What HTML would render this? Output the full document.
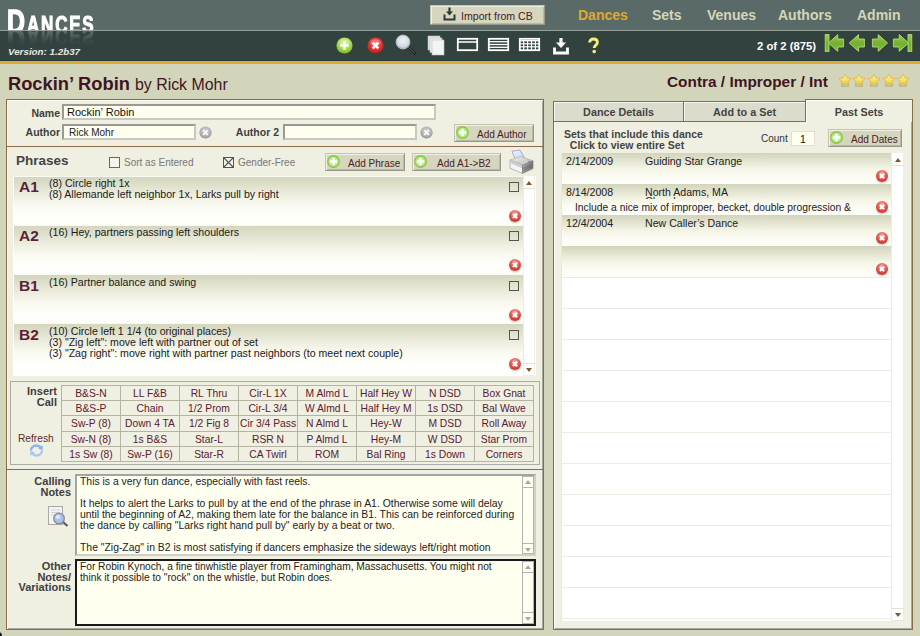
<!DOCTYPE html>
<html><head><meta charset="utf-8">
<style>
*{box-sizing:border-box;margin:0;padding:0}
html,body{width:920px;height:636px;overflow:hidden;background:#d3d5bb;font-family:"Liberation Sans",sans-serif;position:relative}
.a{position:absolute}
.hdr1{left:0;top:0;width:920px;height:30px;background:#5a6a68}
.hline{left:0;top:30px;width:920px;height:1px;background:#94a098}
.hdr2{left:0;top:31px;width:920px;height:30px;background:#32423f;border-bottom:1px solid #2a3a40}
.gold{left:0;top:61px;width:920px;height:3px;background:#dcaa2c}
.nav{top:7px;font:bold 14px "Liberation Sans",sans-serif;color:#d6d6b6;white-space:nowrap}
.btn{background:#d6d6be;border:1px solid #c4c4b0;border-right-color:#98988a;border-bottom-color:#98988a;box-shadow:inset 1px 1px 0 #f0f0e2,inset -1px -1px 0 #b8b8a6;color:#4a2028;white-space:nowrap}
.panel{background:#efefe2;border:1px solid #8b6a45;box-shadow:inset 1px 1px 0 #fbfbf4,inset -1px -1px 0 #a8a8a0}
.lbl{font:bold 10px "Liberation Sans",sans-serif;color:#3e3e3e;white-space:nowrap;text-align:right}
.inp{background:#fffff0;border:2px solid #9a9a90;border-right-color:#c8c8c0;border-bottom-color:#c8c8c0}
.txt{font:10px "Liberation Sans",sans-serif;color:#222;white-space:nowrap}
.maroon{color:#401422}
.prow{left:14px;width:509px;background:linear-gradient(#fafaf4 0,#fafaf4 1px,#d4d6be 1px,#dcdec8 15%,#eeeee0 40%,#fafaf2 62%,#fefefa 80%)}
.plab{left:19px;margin-top:-2px;font:bold 15.5px "Liberation Sans",sans-serif;color:#5e1e38}
.ptxt{left:49px;font:10.6px/11px "Liberation Sans",sans-serif;color:#1a1a1a;white-space:nowrap}
.pchk{left:509px;width:10px;height:10px;border:1px solid #555}
.xbtn{width:12px;height:12px;border-radius:50%;background:radial-gradient(circle at 50% 30%,#f4b0a8,#e06058 40%,#d03830 75%,#c02820);box-shadow:0 1.5px 1.5px rgba(80,80,60,0.25)}
.xbtn::before,.xbtn::after{content:"";position:absolute;left:5px;top:3px;width:2.2px;height:6px;background:#fff;transform:rotate(45deg)}
.xbtn::after{transform:rotate(-45deg)}
.grid{border-collapse:collapse;table-layout:fixed;width:473px;height:77px}
.grid td{border:1px solid #b4b4a0;width:59px;height:15.2px;padding:0;text-align:center;font:10.3px/13px "Liberation Sans",sans-serif;color:#5a2030;white-space:nowrap;padding-top:1px}
.notes{font:10.4px/11px "Liberation Sans",sans-serif;color:#222;white-space:nowrap}
.tab{background:#dcdccc;border:1px solid #8b6a45;box-shadow:inset 1px 1px 0 #f6f6ee;font:bold 10.8px/21px "Liberation Sans",sans-serif;color:#444;text-align:center;white-space:nowrap}
.tab.act{background:#efefe2;border-bottom:none;line-height:25px;height:23px;box-shadow:inset 1px 1px 0 #fafaf2}
.srow{left:562px;width:329px;height:31px;background:linear-gradient(#d2d4bc,#e4e4d0 25%,#f4f4e6 50%,#fcfcf4 75%,#fefefa)}
.stxt{font:10.6px/11px "Liberation Sans",sans-serif;color:#222;white-space:nowrap}
.lg{position:absolute;left:0;top:0;height:30px;width:100px;color:#fff;font-weight:bold;white-space:nowrap}
.lg .d{position:absolute;left:0px;bottom:-7px;font-size:32.5px;line-height:29px;transform:scaleX(0.77);transform-origin:0 100%;-webkit-text-stroke:1.3px #fff}
.lg .r{position:absolute;left:20px;bottom:-4.9px;font-size:23px;line-height:20px;letter-spacing:2.4px;transform:scaleX(0.74);transform-origin:0 100%;-webkit-text-stroke:1.1px #fff}
.tsb{width:12px;border:1px solid #b4b4b0;background:#fffff0}
.tup{width:0;height:0;border-left:3.5px solid transparent;border-right:3.5px solid transparent;border-bottom:4px solid #a8a8a8}
.tdn{width:0;height:0;border-left:3.5px solid transparent;border-right:3.5px solid transparent;border-top:4px solid #a8a8a8}
</style></head><body>

<svg width="0" height="0" style="position:absolute">
<defs>
<radialGradient id="gG" cx="50%" cy="35%" r="65%"><stop offset="0" stop-color="#d4f098"/><stop offset="0.55" stop-color="#a8dc50"/><stop offset="1" stop-color="#78b828"/></radialGradient>
<radialGradient id="rG" cx="50%" cy="40%" r="60%"><stop offset="0" stop-color="#f08080"/><stop offset="0.6" stop-color="#dc3838"/><stop offset="1" stop-color="#b01c1c"/></radialGradient>
<radialGradient id="cG" cx="50%" cy="40%" r="60%"><stop offset="0" stop-color="#d8d8d8"/><stop offset="0.7" stop-color="#b0b0b0"/><stop offset="1" stop-color="#8c8c8c"/></radialGradient>
<linearGradient id="arG" x1="0" y1="0" x2="0" y2="1"><stop offset="0" stop-color="#9ccc58"/><stop offset="0.5" stop-color="#74b030"/><stop offset="1" stop-color="#80bc3c"/></linearGradient>
<linearGradient id="stG" x1="0" y1="0" x2="0" y2="1"><stop offset="0" stop-color="#fff8b0"/><stop offset="0.55" stop-color="#f2e060"/><stop offset="1" stop-color="#e0c040"/></linearGradient>
<symbol id="plus" viewBox="0 0 16 16"><circle cx="8" cy="8" r="7.6" fill="url(#gG)"/><ellipse cx="8" cy="5" rx="5" ry="3" fill="#fff" opacity="0.25"/><path d="M8 4v8M4 8h8" stroke="#f8fff0" stroke-width="2.3"/></symbol>
<symbol id="plusb" viewBox="0 0 16 16"><circle cx="8" cy="8" r="7.1" fill="#bce890" stroke="#84c83c" stroke-width="1.6"/><path d="M8 3.6v8.8M3.6 8h8.8" stroke="#fff" stroke-width="3"/></symbol>
<symbol id="xred" viewBox="0 0 16 16"><circle cx="8" cy="8" r="7.6" fill="url(#rG)"/><ellipse cx="8" cy="5" rx="5" ry="3" fill="#fff" opacity="0.2"/><path d="M5.3 5.3l5.4 5.4M10.7 5.3l-5.4 5.4" stroke="#fff" stroke-width="2.3"/></symbol>
<symbol id="xgrey" viewBox="0 0 16 16"><circle cx="8" cy="8" r="7.5" fill="url(#cG)"/><path d="M5.2 5.2l5.6 5.6M10.8 5.2l-5.6 5.6" stroke="#fafafa" stroke-width="2.2"/></symbol>
<symbol id="star" viewBox="0 0 24 24"><ellipse cx="12" cy="22.5" rx="7" ry="1.5" fill="#8a8a70" opacity="0.35"/><path d="M12.00 2.00L15.29 8.27L22.27 9.46L17.33 14.53L18.35 21.54L12.00 18.40L5.65 21.54L6.67 14.53L1.73 9.46L8.71 8.27z" fill="url(#stG)" stroke="#d4a838" stroke-width="1.1" stroke-linejoin="round"/></symbol>
</defs></svg>
<div class="a hdr1"></div>
<div class="a hline"></div>
<div class="a hdr2"></div>
<div class="a gold"></div>

<!-- logo -->
<div class="a logo" style="left:7px;top:0px;height:30px;overflow:hidden;width:100px"><div class="lg"><span class="d">D</span><span class="r">ANCES</span></div></div>
<div class="a logo" style="left:7px;top:31px;height:14px;overflow:hidden;width:100px;opacity:0.22;-webkit-mask-image:linear-gradient(#000,rgba(0,0,0,0.3) 60%,transparent)"><div class="lg" style="transform:scaleY(-1);transform-origin:0 100%;top:-30px"><span class="d">D</span><span class="r">ANCES</span></div></div>
<div class="a" style="left:8px;top:45.5px;font:bold italic 9.8px 'Liberation Sans',sans-serif;color:#e4e8e0;white-space:nowrap">Version: 1.2b37</div>

<!-- import button -->
<div class="a btn" style="left:430px;top:5px;width:115px;height:20px;font:11.5px 'Liberation Sans',sans-serif;padding:4px 0 0 30px;font-size:10.6px">Import from CB</div>
<svg class="a" style="left:443px;top:7px" width="13" height="14" viewBox="0 0 13 14"><path d="M1.5 7.5v5h10v-5" fill="none" stroke="#2c3a38" stroke-width="2"/><rect x="5.4" y="0.5" width="2.2" height="4.5" fill="#2c3a38"/><path d="M3 4.6h7l-3.5 4z" fill="#2c3a38"/></svg>

<!-- nav -->
<div class="a nav" style="left:578px;color:#e0a830">Dances</div>
<div class="a nav" style="left:652px">Sets</div>
<div class="a nav" style="left:707px">Venues</div>
<div class="a nav" style="left:778px">Authors</div>
<div class="a nav" style="left:857px">Admin</div>

<div class="a" style="left:757px;top:40px;font:bold 11.3px 'Liberation Sans',sans-serif;color:#fff;white-space:nowrap">2 of 2 (875)</div>


<!-- toolbar icons -->
<svg class="a" style="left:336px;top:37px" width="17" height="17"><use href="#plus"/></svg>
<svg class="a" style="left:367px;top:37px" width="17" height="17"><use href="#xred"/></svg>
<svg class="a" style="left:395px;top:34px" width="22" height="21" viewBox="0 0 22 21"><line x1="12" y1="12" x2="20.5" y2="20" stroke="#1c2222" stroke-width="2.6"/><line x1="12.5" y1="12.5" x2="19.5" y2="19" stroke="#777" stroke-width="0.9"/><defs><radialGradient id="mgG" cx="50%" cy="40%" r="60%"><stop offset="0" stop-color="#eef2f6"/><stop offset="0.7" stop-color="#d4dce4"/><stop offset="1" stop-color="#a8b0b8"/></radialGradient></defs><circle cx="8" cy="8" r="6.9" fill="url(#mgG)" stroke="#b8bcc0" stroke-width="1"/></svg>
<svg class="a" style="left:427px;top:35px" width="18" height="21" viewBox="0 0 18 21"><rect x="1" y="1" width="12" height="14" fill="#e8e8e8" stroke="#bbb" stroke-width="0.6"/><rect x="3" y="3" width="12" height="14.5" fill="#efefef" stroke="#bbb" stroke-width="0.6"/><rect x="5" y="5" width="12" height="15" fill="#f4f4f4" stroke="#c0c0c0" stroke-width="0.6"/></svg>
<svg class="a" style="left:456px;top:37px" width="23" height="15" viewBox="0 0 23 15"><rect x="1.8" y="1.8" width="19.4" height="11.4" fill="none" stroke="#fff" stroke-width="1.8"/><line x1="1" y1="5" x2="22" y2="5" stroke="#fff" stroke-width="1.5"/></svg>
<svg class="a" style="left:487px;top:37px" width="23" height="15" viewBox="0 0 23 15"><rect x="1.8" y="1.8" width="19.4" height="11.4" fill="none" stroke="#fff" stroke-width="1.8"/><line x1="1" y1="4.7" x2="22" y2="4.7" stroke="#fff" stroke-width="1.3"/><line x1="1" y1="7.5" x2="22" y2="7.5" stroke="#fff" stroke-width="1.3"/><line x1="1" y1="10.3" x2="22" y2="10.3" stroke="#fff" stroke-width="1.3"/></svg>
<svg class="a" style="left:518px;top:37px" width="23" height="15" viewBox="0 0 23 15"><rect x="1.8" y="1.8" width="19.4" height="11.4" fill="none" stroke="#fff" stroke-width="1.8"/><line x1="1" y1="3.6" x2="22" y2="3.6" stroke="#fff" stroke-width="1.6"/><line x1="1" y1="6.8" x2="22" y2="6.8" stroke="#fff" stroke-width="1.2"/><line x1="1" y1="9.8" x2="22" y2="9.8" stroke="#fff" stroke-width="1.2"/><line x1="5.7" y1="4" x2="5.7" y2="13" stroke="#fff" stroke-width="1.2"/><line x1="9.6" y1="4" x2="9.6" y2="13" stroke="#fff" stroke-width="1.2"/><line x1="13.5" y1="4" x2="13.5" y2="13" stroke="#fff" stroke-width="1.2"/><line x1="17.4" y1="4" x2="17.4" y2="13" stroke="#fff" stroke-width="1.2"/></svg>
<svg class="a" style="left:552px;top:37px" width="18" height="18" viewBox="0 0 18 18"><path d="M2.5 10.5v5.5h13v-5.5" fill="none" stroke="#fff" stroke-width="2.8"/><rect x="7.4" y="1" width="3.2" height="5" fill="#fff"/><path d="M4 5.5h10l-5 5.5z" fill="#fff"/></svg>
<svg class="a" style="left:586px;top:37px" width="15" height="18" viewBox="0 0 15 18"><path d="M3.6 5.6c0-2.4 1.8-3.6 3.9-3.6 2.2 0 3.9 1.3 3.9 3.4 0 2.6-3.2 2.9-3.2 5.6" fill="none" stroke="#f2ee80" stroke-width="2.8"/><circle cx="8.2" cy="14.6" r="1.8" fill="#f2ee80"/></svg>

<!-- nav arrows -->
<svg class="a" style="left:824px;top:33px" width="90" height="20" viewBox="0 0 90 20">
<g stroke="#28401a" stroke-width="1.6" fill="none" opacity="0.7"><rect x="1.2" y="1.6" width="3.8" height="16.8"/>
<path d="M4.4 10L13.8 1.6v4.4h5.8v8h-5.8v4.4z"/>
<path d="M25.2 10L34.6 1.6v4.4h5.8v8h-5.8v4.4z"/>
<path d="M63.6 10L54.2 1.6v4.4h-5.8v8h5.8v4.4z"/>
<path d="M84.6 10L75.2 1.6v4.4h-5.8v8h5.8v4.4z"/>
<rect x="84" y="1.6" width="3.8" height="16.8"/></g>
<g stroke="#b4da7c" stroke-width="0.9" fill="url(#arG)"><rect x="1.2" y="1.6" width="3.8" height="16.8"/>
<path d="M4.4 10L13.8 1.6v4.4h5.8v8h-5.8v4.4z"/>
<path d="M25.2 10L34.6 1.6v4.4h5.8v8h-5.8v4.4z"/>
<path d="M63.6 10L54.2 1.6v4.4h-5.8v8h5.8v4.4z"/>
<path d="M84.6 10L75.2 1.6v4.4h-5.8v8h5.8v4.4z"/>
<rect x="84" y="1.6" width="3.8" height="16.8"/></g>
</svg>
<!-- stars -->
<svg class="a" style="left:838px;top:73px" width="14" height="14"><use href="#star"/></svg>
<svg class="a" style="left:852px;top:73px" width="14" height="14"><use href="#star"/></svg>
<svg class="a" style="left:866.5px;top:73px" width="14" height="14"><use href="#star"/></svg>
<svg class="a" style="left:881.5px;top:73px" width="14" height="14"><use href="#star"/></svg>
<svg class="a" style="left:895.5px;top:73px" width="14" height="14"><use href="#star"/></svg>

<!-- title -->
<div class="a maroon" style="left:8px;top:73px;font:bold 18.3px 'Liberation Sans',sans-serif;white-space:nowrap">Rockin&#8217; Robin <span style="font-weight:normal;font-size:15.9px">by Rick Mohr</span></div>
<div class="a maroon" style="left:667px;top:73px;font:bold 15.4px 'Liberation Sans',sans-serif;color:#401422;white-space:nowrap">Contra / Improper / Int</div>

<!-- left panel -->
<div class="a panel" style="left:6px;top:99px;width:538px;height:531px"></div>


<!-- left panel content -->
<div class="a lbl" style="left:20px;top:107px;width:40px;font-size:10.5px">Name</div>
<div class="a inp" style="left:62px;top:104px;width:374px;height:16px"></div>
<div class="a txt" style="left:67px;top:106px;font-size:11px;color:#111">Rockin&#8217; Robin</div>
<div class="a lbl" style="left:10px;top:126px;width:50px;font-size:10.5px">Author</div>
<div class="a inp" style="left:62px;top:124px;width:134px;height:16px"></div>
<div class="a txt" style="left:69px;top:127px;font-size:10px;color:#222">Rick Mohr</div>
<svg class="a" style="left:199px;top:126px" width="13" height="13"><use href="#xgrey"/></svg>
<div class="a lbl" style="left:229px;top:126px;width:50px;font-size:10.5px">Author 2</div>
<div class="a inp" style="left:283px;top:124px;width:134px;height:16px"></div>
<svg class="a" style="left:420px;top:126px" width="13" height="13"><use href="#xgrey"/></svg>
<div class="a btn" style="left:454px;top:124px;width:80px;height:18px;font:10px 'Liberation Sans',sans-serif;padding:4px 0 0 22px">Add Author</div>
<div class="a" style="left:7px;top:146px;width:536px;height:1px;background:#8b6a45"></div>

<div class="a" style="left:16px;top:153px;font:bold 13.5px 'Liberation Sans',sans-serif;color:#444;white-space:nowrap">Phrases</div>
<div class="a" style="left:109px;top:157px;width:11px;height:11px;border:1px solid #666;background:#f4f4ea"></div>
<div class="a txt" style="left:124px;top:157px;color:#777;font-size:10px">Sort as Entered</div>

<div class="a txt" style="left:238px;top:157px;color:#777;font-size:10px">Gender-Free</div>
<div class="a btn" style="left:325px;top:153px;width:80px;height:18px;font:10px 'Liberation Sans',sans-serif;padding:4px 0 0 22px">Add Phrase</div>
<div class="a btn" style="left:412px;top:153px;width:89px;height:18px;font:10px 'Liberation Sans',sans-serif;padding:4px 0 0 24px">Add A1-&gt;B2</div>


<svg class="a" style="left:456px;top:126px" width="13" height="13"><use href="#plusb"/></svg>
<svg class="a" style="left:327px;top:155px" width="13" height="13"><use href="#plusb"/></svg>
<svg class="a" style="left:414px;top:155px" width="13" height="13"><use href="#plusb"/></svg>
<!-- gender-free X -->
<svg class="a" style="left:223px;top:157px" width="11" height="11" viewBox="0 0 11 11"><rect x="0.5" y="0.5" width="10" height="10" fill="#f4f4ea" stroke="#555" stroke-width="1"/><path d="M1 1l9 9M10 1l-9 9" stroke="#555" stroke-width="1.1"/></svg>
<!-- printer -->
<svg class="a" style="left:508px;top:149px" width="27" height="26" viewBox="0 0 27 26">
<defs><linearGradient id="prT" x1="0" y1="0" x2="1" y2="1"><stop offset="0" stop-color="#f0f0f0"/><stop offset="1" stop-color="#b8b8b8"/></linearGradient>
<linearGradient id="prR" x1="0" y1="0" x2="1" y2="0"><stop offset="0" stop-color="#a0a0a0"/><stop offset="1" stop-color="#787878"/></linearGradient>
<linearGradient id="prP" x1="0" y1="0" x2="1" y2="1"><stop offset="0" stop-color="#f4f8ff"/><stop offset="1" stop-color="#b8d0f0"/></linearGradient></defs>
<path d="M4 2.2l8-1.2 4.2 7.2-8.6 3z" fill="url(#prP)" stroke="#8a96a8" stroke-width="0.7"/>
<path d="M2 11l11-3.4 12 4.2-10.5 4.6z" fill="url(#prT)" stroke="#9a9a9a" stroke-width="0.5"/>
<path d="M2 11l12.5 5.4v8L2 19.2z" fill="#f6f6f6" stroke="#8a8a8a" stroke-width="0.6"/>
<path d="M2 11l12.5 5.4v3L2 14.2z" fill="#cfcfcf"/>
<path d="M14.5 16.4L25 11.8v7.8l-10.5 4.8z" fill="url(#prR)" stroke="#707070" stroke-width="0.6"/>
<path d="M15.5 19.5l8.5-3.8M15.5 21.5l8.5-3.8" stroke="#5a5a5a" stroke-width="0.6"/>
<ellipse cx="21" cy="12.5" rx="1.3" ry="0.8" fill="#58c040"/>
</svg>
<!-- phrases list -->
<div class="a" style="left:13px;top:176px;width:523px;height:200px;background:#fff"></div>
<div class="a prow" style="top:176px;height:49px"></div>
<div class="a plab" style="top:180px">A1</div>
<div class="a ptxt" style="top:178px">(8) Circle right 1x<br>(8) Allemande left neighbor 1x, Larks pull by right</div>
<div class="a pchk" style="top:182px"></div>
<div class="a xbtn" style="left:508.5px;top:210px"></div>
<div class="a prow" style="top:225px;height:49px"></div>
<div class="a plab" style="top:229px">A2</div>
<div class="a ptxt" style="top:227px">(16) Hey, partners passing left shoulders</div>
<div class="a pchk" style="top:231px"></div>
<div class="a xbtn" style="left:508.5px;top:259px"></div>
<div class="a prow" style="top:274px;height:49px"></div>
<div class="a plab" style="top:279px">B1</div>
<div class="a ptxt" style="top:277px">(16) Partner balance and swing</div>
<div class="a pchk" style="top:281px"></div>
<div class="a xbtn" style="left:508.5px;top:309px"></div>
<div class="a prow" style="top:323px;height:49px"></div>
<div class="a plab" style="top:328px">B2</div>
<div class="a ptxt" style="top:326px">(10) Circle left 1 1/4 (to original places)<br>(3) &quot;Zig left&quot;: move left with partner out of set<br>(3) &quot;Zag right&quot;: move right with partner past neighbors (to meet next couple)</div>
<div class="a pchk" style="top:330px"></div>
<div class="a xbtn" style="left:508.5px;top:358px"></div>
<div class="a" style="left:523px;top:176px;width:12px;height:200px;background:#fff;border-left:1px solid #f0ece4;border-right:1px solid #f4f0e8;border-bottom:1px solid #f0ece4"></div>
<div class="a" style="left:523px;top:188px;width:12px;height:1px;background:#e8e0d0"></div>
<div class="a" style="left:526px;top:181px;width:0;height:0;border-left:3.5px solid transparent;border-right:3.5px solid transparent;border-bottom:4px solid #7a5a30"></div>
<div class="a" style="left:523px;top:363px;width:12px;height:1px;background:#e8e0d0"></div>
<div class="a" style="left:526px;top:368px;width:0;height:0;border-left:3.5px solid transparent;border-right:3.5px solid transparent;border-top:4px solid #7a5a30"></div>


<!-- insert call -->
<div class="a" style="left:10px;top:381px;width:530px;height:84px;border:1px solid #a8aca4"></div>
<div class="a lbl" style="left:10px;top:386px;width:47px;font-size:11px;line-height:11px">Insert<br>Call</div>
<div class="a" style="left:18px;top:433px;font:10.2px 'Liberation Sans',sans-serif;color:#5a2a30">Refresh</div>
<table class="a grid" style="left:61px;top:385px">
<tr><td>B&amp;S-N</td><td>LL F&amp;B</td><td>RL Thru</td><td>Cir-L 1X</td><td>M Almd L</td><td>Half Hey W</td><td>N DSD</td><td>Box Gnat</td></tr>
<tr><td>B&amp;S-P</td><td>Chain</td><td>1/2 Prom</td><td>Cir-L 3/4</td><td>W Almd L</td><td>Half Hey M</td><td>1s DSD</td><td>Bal Wave</td></tr>
<tr><td>Sw-P (8)</td><td>Down 4 TA</td><td>1/2 Fig 8</td><td>Cir 3/4 Pass</td><td>N Almd L</td><td>Hey-W</td><td>M DSD</td><td>Roll Away</td></tr>
<tr><td>Sw-N (8)</td><td>1s B&amp;S</td><td>Star-L</td><td>RSR N</td><td>P Almd L</td><td>Hey-M</td><td>W DSD</td><td>Star Prom</td></tr>
<tr><td>1s Sw (8)</td><td>Sw-P (16)</td><td>Star-R</td><td>CA Twirl</td><td>ROM</td><td>Bal Ring</td><td>1s Down</td><td>Corners</td></tr>
</table>
<div class="a" style="left:7px;top:469px;width:536px;height:1px;background:#8b6a45"></div>
<div class="a lbl" style="left:21px;top:476px;width:50px;font-size:11px;line-height:11px;color:#404040">Calling<br>Notes</div>
<div class="a lbl" style="left:11px;top:561px;width:60px;font-size:11px;line-height:10.6px;color:#404040">Other<br>Notes/<br>Variations</div>
<div class="a" style="left:75px;top:474px;width:461px;height:82px;background:#fffff0;border:2px solid #a4a4a0;border-right-color:#d0d0c8;border-bottom-color:#d0d0c8"></div>
<div class="a notes" style="left:80px;top:476px">This is a very fun dance, especially with fast reels.<br><br>It helps to alert the Larks to pull by at the end of the phrase in A1. Otherwise some will delay<br>until the beginning of A2, making them late for the balance in B1. This can be reinforced during<br>the dance by calling &quot;Larks right hand pull by&quot; early by a beat or two.<br><br>The &quot;Zig-Zag&quot; in B2 is most satisfying if dancers emphasize the sideways left/right motion</div>
<div class="a" style="left:75px;top:559px;width:461px;height:67px;background:#fffff0;border:2px solid #1a1a1a"></div>
<div class="a notes" style="left:80px;top:561px;font-size:10.2px">For Robin Kynoch, a fine tinwhistle player from Framingham, Massachusetts. You might not<br>think it possible to &quot;rock&quot; on the whistle, but Robin does.</div>


<!-- textarea scrollbars -->
<div class="a tsb" style="left:522px;top:476px;height:78px"></div>
<div class="a" style="left:522px;top:487px;width:12px;height:1px;background:#b4b4b0"></div>
<div class="a" style="left:522px;top:543px;width:12px;height:1px;background:#b4b4b0"></div>
<div class="a tup" style="left:525px;top:480px"></div>
<div class="a tdn" style="left:525px;top:548px"></div>
<div class="a tsb" style="left:522px;top:561px;height:63px"></div>
<div class="a" style="left:522px;top:572px;width:12px;height:1px;background:#b4b4b0"></div>
<div class="a" style="left:522px;top:612px;width:12px;height:1px;background:#b4b4b0"></div>
<div class="a tup" style="left:525px;top:565px"></div>
<div class="a tdn" style="left:525px;top:617px"></div>
<!-- refresh icon -->
<svg class="a" style="left:28px;top:443px" width="17" height="15" viewBox="0 0 17 15">
<path d="M3 7.5c0-3 2.5-5 5.5-5 2 0 3.5 1 4.3 2.2" fill="none" stroke="#8cb4e4" stroke-width="2.4"/>
<path d="M14.8 2.2l-0.2 5-4.6-1.6z" fill="#8cb4e4"/>
<path d="M14 7.5c0 3-2.5 5-5.5 5-2 0-3.5-1-4.3-2.2" fill="none" stroke="#a8c8ec" stroke-width="2.4"/>
<path d="M2.2 12.8l0.2-5 4.6 1.6z" fill="#a8c8ec"/>
</svg>
<!-- notes icon -->
<svg class="a" style="left:47px;top:505px" width="23" height="23" viewBox="0 0 23 23">
<rect x="1.5" y="1.5" width="14" height="18" fill="#f4f4f4" stroke="#a8a8a8" stroke-width="1"/>
<path d="M4 5h9M4 7.5h9M4 10h6" stroke="#c8c8c8" stroke-width="0.8"/>
<line x1="16" y1="17" x2="20.5" y2="21" stroke="#555" stroke-width="2"/>
<circle cx="12" cy="13.5" r="5.3" fill="#a8c4ec" stroke="#8a8a8a" stroke-width="1.3"/>
<ellipse cx="11" cy="12" rx="2.5" ry="2" fill="#d8e6f8"/>
</svg>
<!-- right panel -->
<div class="a panel" style="left:553px;top:120px;width:360px;height:510px"></div>
<div class="a tab" style="left:553px;top:101px;width:131px;height:21px">Dance Details</div>
<div class="a tab" style="left:683px;top:101px;width:123px;height:21px">Add to a Set</div>
<div class="a tab act" style="left:805px;top:99px;width:108px;height:23px">Past Sets</div>
<div class="a lbl" style="left:564px;top:129px;text-align:left;font-size:10.5px;line-height:11px;color:#444">Sets that include this dance<br>&nbsp; Click to view entire Set</div>
<div class="a txt" style="left:761px;top:133px;font-size:10px;color:#333">Count</div>
<div class="a" style="left:791px;top:131px;width:24px;height:15px;background:#fffff0;border:1px solid #e0e0d4"></div>
<div class="a txt" style="left:800px;top:133px;font-size:10.5px;color:#111">1</div>
<div class="a btn" style="left:828px;top:129px;width:74px;height:18px;font:10px 'Liberation Sans',sans-serif;padding:4px 0 0 22px">Add Dates</div>
<svg class="a" style="left:830px;top:131px" width="13" height="13"><use href="#plusb"/></svg>

<div class="a" style="left:561px;top:153px;width:343px;height:468px;background:#fff;border-left:1px solid #e8e8e0"></div>
<div class="a srow" style="top:153px"></div>
<div class="a stxt" style="left:566px;top:156px">2/14/2009</div>
<div class="a stxt" style="left:645px;top:156px">Guiding Star Grange</div>
<div class="a xbtn" style="left:876px;top:170px"></div>
<div class="a srow" style="top:184px"></div>
<div class="a stxt" style="left:566px;top:187px">8/14/2008</div>
<div class="a stxt" style="left:645px;top:187px">North Adams, MA</div>
<div class="a" style="left:645px;top:196px;width:60px;height:3px;overflow:hidden"><div class="stxt" style="position:absolute;top:0;left:0">Church</div></div>
<div class="a stxt" style="left:575px;top:202px;font-size:10.3px;background:linear-gradient(rgba(250,250,242,0),#fafaf2 30%)">Include a nice mix of improper, becket, double progression &amp;</div>
<div class="a xbtn" style="left:876px;top:201px"></div>
<div class="a srow" style="top:215px"></div>
<div class="a stxt" style="left:566px;top:218px">12/4/2004</div>
<div class="a stxt" style="left:645px;top:218px">New Caller&#8217;s Dance</div>
<div class="a xbtn" style="left:876px;top:232px"></div>
<div class="a srow" style="top:246px"></div>
<div class="a xbtn" style="left:876px;top:263px"></div>
<div class="a" style="left:562px;top:277px;width:329px;height:1px;background:#ecece4"></div>
<div class="a" style="left:562px;top:308px;width:329px;height:1px;background:#ecece4"></div>
<div class="a" style="left:562px;top:339px;width:329px;height:1px;background:#ecece4"></div>
<div class="a" style="left:562px;top:370px;width:329px;height:1px;background:#ecece4"></div>
<div class="a" style="left:562px;top:401px;width:329px;height:1px;background:#ecece4"></div>
<div class="a" style="left:562px;top:432px;width:329px;height:1px;background:#ecece4"></div>
<div class="a" style="left:562px;top:463px;width:329px;height:1px;background:#ecece4"></div>
<div class="a" style="left:562px;top:494px;width:329px;height:1px;background:#ecece4"></div>
<div class="a" style="left:562px;top:525px;width:329px;height:1px;background:#ecece4"></div>
<div class="a" style="left:562px;top:556px;width:329px;height:1px;background:#ecece4"></div>
<div class="a" style="left:562px;top:587px;width:329px;height:1px;background:#ecece4"></div>
<div class="a" style="left:562px;top:618px;width:329px;height:1px;background:#ecece4"></div>
<div class="a" style="left:891px;top:153px;width:13px;height:468px;background:#fff;border-left:1px solid #f0ece4;border-right:1px solid #f0ece4;border-bottom:1px solid #ece8dc"></div>
<div class="a" style="left:891px;top:165px;width:13px;height:1px;background:#e8e0d0"></div>
<div class="a" style="left:894.5px;top:158px;width:0;height:0;border-left:3.5px solid transparent;border-right:3.5px solid transparent;border-bottom:4px solid #7a5a30"></div>
<div class="a" style="left:891px;top:608px;width:13px;height:1px;background:#e8e0d0"></div>
<div class="a" style="left:894.5px;top:613px;width:0;height:0;border-left:3.5px solid transparent;border-right:3.5px solid transparent;border-top:4px solid #7a5a30"></div>
<div class="a" style="left:-5px;top:632px;width:7px;height:8px;border-radius:50%;background:#111"></div>
</body></html>
